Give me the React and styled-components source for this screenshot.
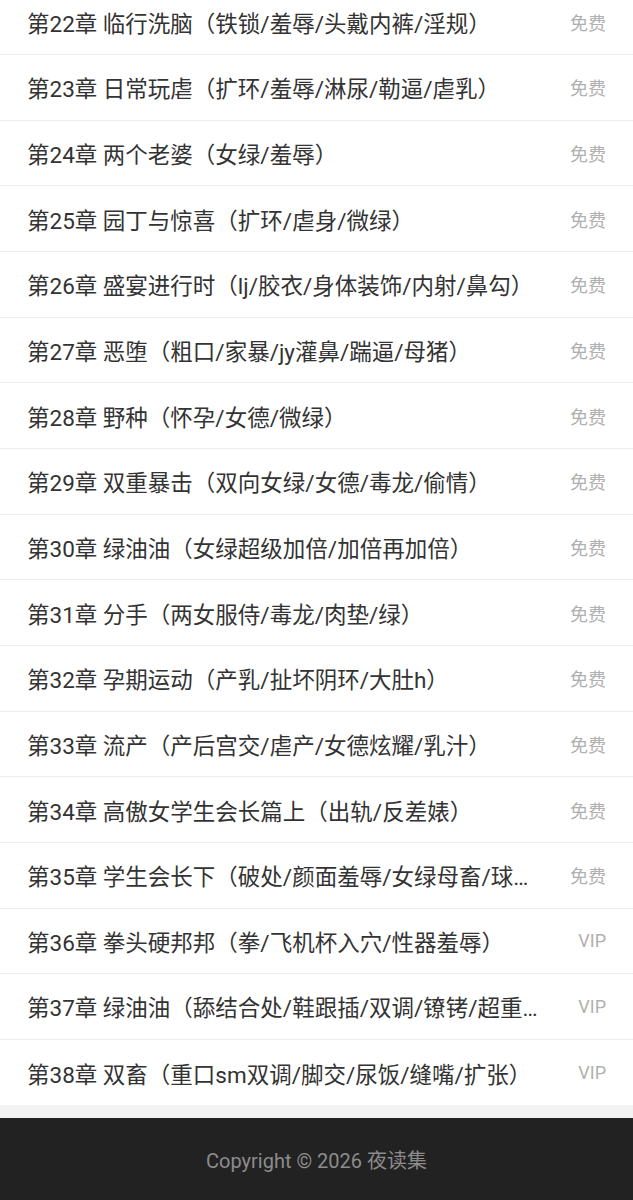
import React from "react";
import styled, { createGlobalStyle } from "styled-components";

const GlobalStyle = createGlobalStyle`
  html, body {
    margin: 0;
    padding: 0;
    background: #ffffff;
    font-family: "Roboto", "Noto Sans CJK SC", sans-serif;
  }
`;

const Page = styled.div`
  display: flex;
  flex-direction: column;
  width: 633px;
  overflow: hidden;
`;

const ChapterList = styled.ul`
  list-style: none;
  margin: -10.7px 0 0 0;
  padding: 0;
  background: #ffffff;
`;

const ChapterRow = styled.li`
  display: flex;
  align-items: center;
  box-sizing: border-box;
  height: 65.67px;
  padding: 0 27px;
  border-bottom: 1px solid #ececec;
  &:last-child {
    border-bottom: none;
  }
`;

const Title = styled.span`
  flex: 1;
  min-width: 0;
  font-size: 22.5px;
  color: #333333;
  white-space: nowrap;
  overflow: hidden;
  text-overflow: ellipsis;
  text-spacing-trim: space-all;
  font-feature-settings: "halt" 0, "chws" 0, "palt" 0;
`;

const Badge = styled.span`
  flex-shrink: 0;
  margin-left: 30px;
  font-size: 18px;
  color: #b0b0b0;
`;

const Gap = styled.div`
  height: 13px;
  background: #f2f2f2;
`;

const Footer = styled.footer`
  display: flex;
  align-items: center;
  justify-content: center;
  height: 82px;
  background: #222222;
  color: #8c8c8c;
  font-size: 20px;
`;

const chapters = [
  ["第22章 临行洗脑（铁锁/羞辱/头戴内裤/淫规）", false],
  ["第23章 日常玩虐（扩环/羞辱/淋尿/勒逼/虐乳）", false],
  ["第24章 两个老婆（女绿/羞辱）", false],
  ["第25章 园丁与惊喜（扩环/虐身/微绿）", false],
  ["第26章 盛宴进行时（lj/胶衣/身体装饰/内射/鼻勾）", false],
  ["第27章 恶堕（粗口/家暴/jy灌鼻/踹逼/母猪）", false],
  ["第28章 野种（怀孕/女德/微绿）", false],
  ["第29章 双重暴击（双向女绿/女德/毒龙/偷情）", false],
  ["第30章 绿油油（女绿超级加倍/加倍再加倍）", false],
  ["第31章 分手（两女服侍/毒龙/肉垫/绿）", false],
  ["第32章 孕期运动（产乳/扯坏阴环/大肚h）", false],
  ["第33章 流产（产后宫交/虐产/女德炫耀/乳汁）", false],
  ["第34章 高傲女学生会长篇上（出轨/反差婊）", false],
  ["第35章 学生会长下（破处/颜面羞辱/女绿母畜/球交/内射）", false],
  ["第36章 拳头硬邦邦（拳/飞机杯入穴/性器羞辱）", true],
  ["第37章 绿油油（舔结合处/鞋跟插/双调/镣铐/超重口）", true],
  ["第38章 双畜（重口sm双调/脚交/尿饭/缝嘴/扩张）", true]
];

export default function App() {
  return (
    <>
      <GlobalStyle />
      <Page>
        <ChapterList>
          {chapters.map(([title, vip]) => (
            <ChapterRow key={title}>
              <Title>{title}</Title>
              <Badge>{vip ? "VIP" : "免费"}</Badge>
            </ChapterRow>
          ))}
        </ChapterList>
        <Gap />
        <Footer>Copyright © 2026 夜读集</Footer>
      </Page>
    </>
  );
}
